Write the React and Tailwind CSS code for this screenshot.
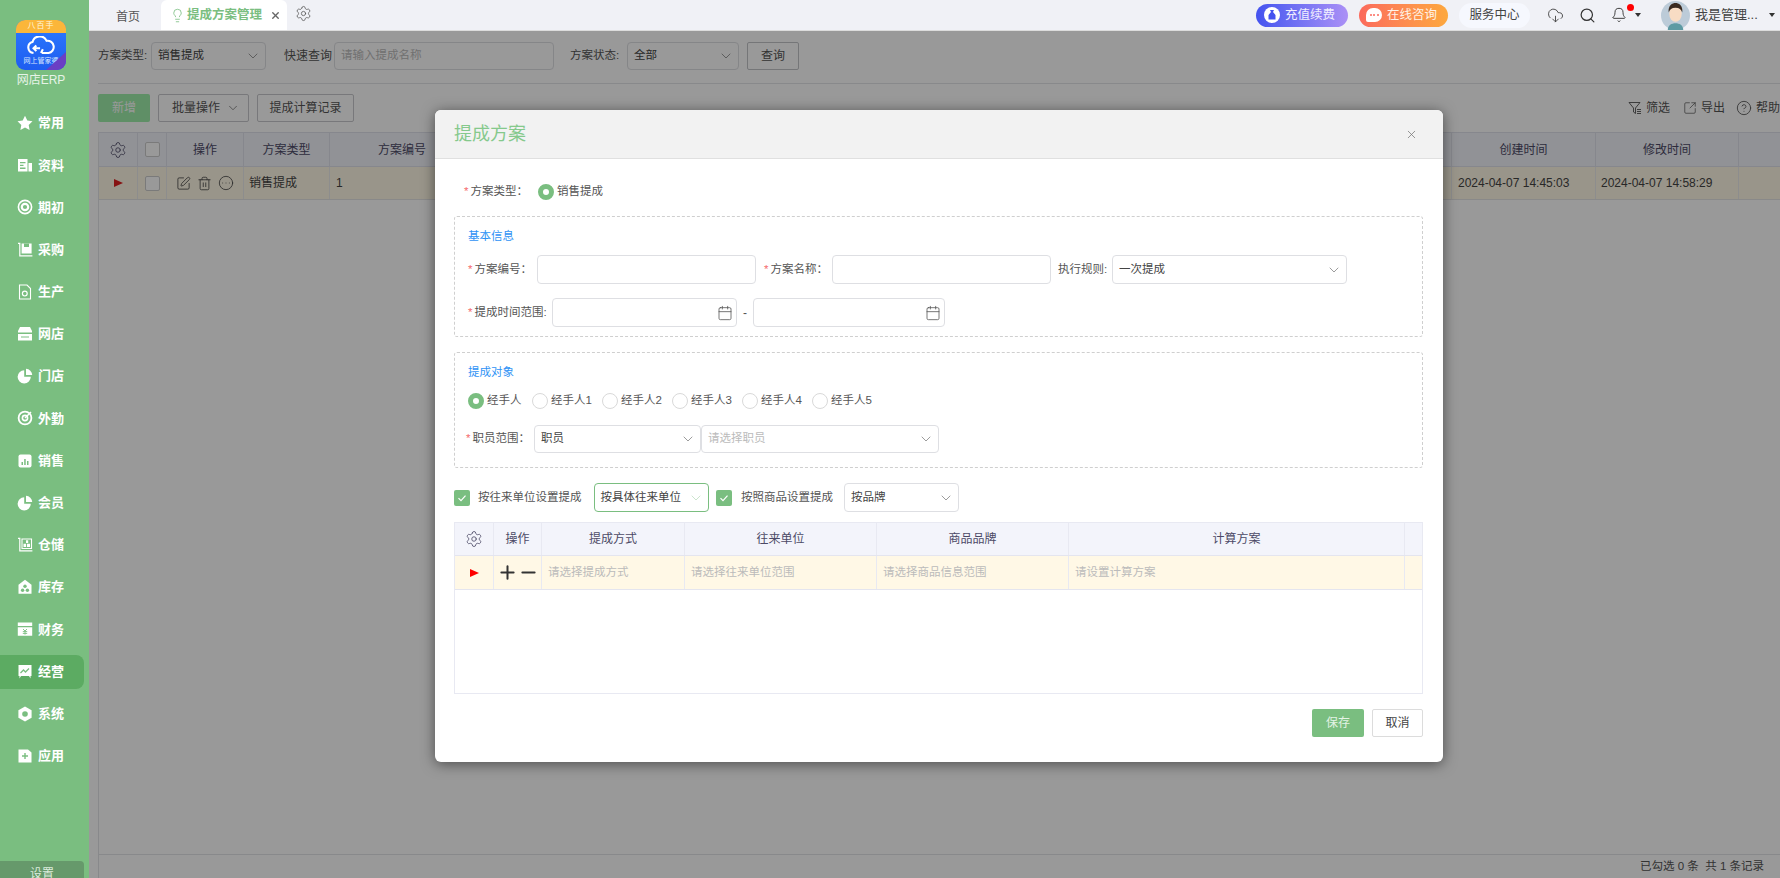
import React from "react";
import { Bell, Calendar, ChevronDown, CircleEllipsis, CircleHelp, CloudDownload, Lightbulb, Minus, Plus, Search, Settings, SquareArrowOutUpRight, SquarePen, Trash2, X } from "lucide-react";

const W = ({ children }) => (
  <svg viewBox="0 0 16 16" className="w-4 h-4 shrink-0" fill="#fff">{children}</svg>
);

const icons = {
  star: <W><path d="M8 .8l2.3 4.8 5.2.7-3.8 3.6.9 5.2L8 12.6l-4.6 2.5.9-5.2L.5 6.3l5.2-.7z" /></W>,
  doc: <W><path d="M1 2h9.5v12.5H1zM11.5 6H15v8.5h-3.5z" /><path d="M3 5h5.5v1.3H3zM3 7.8h3.5v1.3H3zM3 10.6h5.5v1.3H3z" fill="#7abe80" /></W>,
  ring: <W><circle cx="8" cy="8" r="6.6" fill="none" stroke="#fff" strokeWidth="1.6" /><circle cx="8" cy="8" r="3.2" fill="none" stroke="#fff" strokeWidth="2.2" /></W>,
  cart: <W><path d="M4.6 1.5h10v10h-10z" /><path d="M7 1.5h5v3.5H7z" fill="#7abe80" /><path d="M1 .8h2.4v12.4h12v1.2H2.2V2H1z" /></W>,
  make: <W><path d="M2.5 1h7.5l3.5 3.5v10.5h-11z" fill="none" stroke="#fff" strokeWidth="1.1" /><circle cx="7.8" cy="9.6" r="2.4" fill="none" stroke="#fff" strokeWidth="1.2" /></W>,
  shop: <W><path d="M3 1h10l2 4v1.5H1V5zM1 8h14v6.5H1z" /><path d="M4 10.5h8v1H4z" fill="#7abe80" /></W>,
  pie: <W><path d="M7.2 2.2v6.6h6.6A6.6 6.6 0 1 1 7.2 2.2z" /><path d="M9 .8a6.4 6.4 0 0 1 6.2 6.2H9z" /></W>,
  aim: <W><circle cx="8" cy="8" r="6.4" fill="none" stroke="#fff" strokeWidth="1.8" /><circle cx="8" cy="8" r="2.6" fill="none" stroke="#fff" strokeWidth="1.6" /><path d="M8 8l6-6" stroke="#fff" strokeWidth="1.4" /></W>,
  sale: <W><rect x="1.5" y="1.5" width="13" height="13" rx="2" /><path d="M4.5 9h1.5v3H4.5zM7.2 6h1.5v6H7.2zM10 8h1.5v4H10z" fill="#7abe80" /></W>,
  store: <W><path d="M1 .8h2.4v12.4h12v1.2H2.2V2H1z" /><path d="M5 2h9.5v9.5H5z" fill="none" stroke="#fff" strokeWidth="1.1" /><path d="M6.5 6.8h2.6v3.3H6.5zM10 6.8h3v3.3h-3zM9 3.3h2.2v2.6H9z" /></W>,
  house: <W><path d="M8 .8l6.5 5v9H1.5v-9z" /><circle cx="5.6" cy="11.2" r="1.7" fill="#7abe80" /><circle cx="10.4" cy="11.2" r="1.7" fill="#7abe80" /><circle cx="8" cy="7.2" r="1.7" fill="#7abe80" /></W>,
  money: <W><path d="M.8 1.5h14.4v3.5H.8zM.8 6.2h14.4v8.6H.8z" /><path d="M6 8l2 2 2-2M5.8 10.6h4.4M5.8 12.4h4.4M8 10v3.6" fill="none" stroke="#7abe80" strokeWidth=".9" /></W>,
  board: <W><path d="M1.5 1h13v11h-1v2.5l-1.5-2.5H4l-1.5 2.5V12h-1z" /><path d="M3.5 9l3-3 2 2 3.5-3.5" fill="none" stroke="#7abe80" strokeWidth="1.3" /></W>,
  hex: <W><path d="M8 .6l6.6 3.7v7.4L8 15.4l-6.6-3.7V4.3z" /><circle cx="8" cy="8" r="2.8" fill="#7abe80" /></W>,
  add: <W><path d="M1.5 1.5h9.5l3.5 3v10h-13z" /><path d="M7.3 5h1.4v2.3H11v1.4H8.7V11H7.3V8.7H5V7.3h2.3z" fill="#7abe80" /></W>,
};

const menu = [
  ["star", "常用"], ["doc", "资料"], ["ring", "期初"], ["cart", "采购"], ["make", "生产"], ["shop", "网店"], ["pie", "门店"], ["aim", "外勤"],
  ["sale", "销售"], ["pie", "会员"], ["store", "仓储"], ["house", "库存"], ["money", "财务"], ["board", "经营"], ["hex", "系统"], ["add", "应用"],
];

function Logo() {
  return (
    <div className="relative w-[50px] h-[50px] ml-[16px] mt-[20px] rounded-[9px] overflow-hidden bg-gradient-to-b from-[#2f7bff] to-[#1e5cf0]">
      <div className="h-[13px] bg-[#fbb63a] rounded-b-[25px/4px] text-[8px] leading-[12px] text-center text-[#fff6dc] tracking-[1px]">八百手</div>
      <svg viewBox="0 0 32 20" className="absolute left-[10px] top-[16px] w-[30px] h-[19px]" fill="none" stroke="#fff" strokeWidth="2.2">
        <path d="M8 18a6 6 0 0 1-1-11.8A8 8 0 0 1 22 5a6.5 6.5 0 0 1 2 13H17" />
        <path d="M11 10l-3 3 3 3M8 13h7M16 18l2-4" />
      </svg>
      <div className="absolute left-0 right-0 top-[36px] text-[7px] leading-[9px] text-center text-[#d8e6ff]">网上管家婆</div>
      <svg viewBox="0 0 20 18" className="absolute right-0 bottom-0 w-[20px] h-[18px]"><path d="M20 0v18H0z" fill="#6a3fc4" /></svg>
    </div>
  );
}

function Sidebar() {
  return (
    <div className="w-[89px] shrink-0 bg-[#7abe80] flex flex-col h-full">
      <Logo />
      <div className="mt-[3px] mb-[15px] h-[14px] text-[12px] leading-[14px] text-[#e6f3e7] text-center w-[82px]">网店ERP</div>
      {menu.map(([k, t]) => (
        <div key={t} className="h-[42.2px] flex items-center shrink-0">
          <div className={`w-[84px] h-[34px] flex items-center gap-[5px] pl-[17px] rounded-r-lg ${t === "经营" ? "bg-[#5cab62]" : ""}`}>
            {icons[k]}
            <span className="text-[13px] font-bold text-white">{t}</span>
          </div>
        </div>
      ))}
      <div className="mt-auto w-[84px] h-[17px] overflow-hidden bg-[#66996b] rounded-tr text-[12px] leading-[26px] text-center text-[#dcebdd]">设置</div>
    </div>
  );
}

function TopBar() {
  return (
    <div className="h-[31px] shrink-0 bg-[#f0f1f6] border-b border-[#dcdcdc] flex items-stretch text-[12px] text-[#555]">
      <div className="w-[72px] pl-[27px] pt-[8px]">首页</div>
      <div className="w-[126px] bg-white rounded-t-md flex items-center pl-[9px] text-[#7abe80] font-semibold">
        <Lightbulb size={15} strokeWidth={1.3} />
        <span className="ml-[2px] w-[84px] text-[12.5px] whitespace-nowrap">提成方案管理</span>
        <X size={11} strokeWidth={3} className="text-[#666] ml-[-1px]" />
      </div>
      <div className="ml-[8px] pt-[5px]"><Settings size={17} strokeWidth={1.1} className="text-[#555]" /></div>

      <div className="ml-auto flex items-center pr-[5px]">
        <div className="w-[92px] h-[23px] rounded-full bg-gradient-to-r from-[#4452ef] to-[#ab90f6] flex items-center pl-[8px] gap-[5px] text-[#f1efff] text-[12.5px]">
          <span className="w-[16px] h-[16px] rounded-full bg-white flex items-center justify-center">
            <svg viewBox="0 0 12 12" className="w-3 h-3" fill="#4452ef"><path d="M4 1h4L7 3l2.5 3v4.5h-7V6L5 3z" /></svg>
          </span>
          充值续费
        </div>
        <div className="ml-[11px] w-[89px] h-[23px] rounded-full bg-gradient-to-r from-[#fb6a5c] to-[#fda83d] flex items-center pl-[7px] gap-[5px] text-[#fff3e8] text-[12.5px]">
          <span className="w-[16px] h-[14px] rounded-[7px] rounded-bl-[2px] bg-white flex items-center justify-center gap-[1.5px]">
            <i className="w-[2px] h-[2px] rounded-full bg-[#fb6a5c]" />
            <i className="w-[2px] h-[2px] rounded-full bg-[#fb6a5c]" />
            <i className="w-[2px] h-[2px] rounded-full bg-[#fb6a5c]" />
          </span>
          在线咨询
        </div>
        <div className="ml-[11px] w-[71px] h-[25px] rounded-full bg-[#f6f8fe] flex items-center justify-center text-[12.5px] text-[#444]">服务中心</div>
        <CloudDownload size={17} strokeWidth={1.3} className="ml-[17px] text-[#444]" />
        <Search size={17} strokeWidth={1.7} className="ml-[15px] text-[#333]" />
        <div className="relative ml-[15px]">
          <Bell size={16} strokeWidth={1.4} className="text-[#333]" />
          <span className="absolute right-[-7px] top-[-3px] w-[7px] h-[7px] rounded-full bg-[#f00]" />
        </div>
        <span className="ml-[8px] border-x-[3.5px] border-x-transparent border-t-[4px] border-t-[#333]" />
        <svg viewBox="0 0 30 30" className="ml-[20px] w-[29px] h-[29px]">
          <circle cx="15" cy="15" r="15" fill="#bccbd8" />
          <path d="M7 30c0-5 4-7 8-7s8 2 8 7z" fill="#5d9aa3" />
          <ellipse cx="15" cy="13" rx="6.5" ry="8.5" fill="#f8dcc4" />
          <path d="M8 12c-1-8 4-10 7-10s8 2 7 10c-1-3-3-5-7-5s-6 2-7 5z" fill="#3a2a20" />
        </svg>
        <span className="ml-[5px] w-[70px] text-[13px] text-[#444] whitespace-nowrap">我是管理...</span>
        <span className="ml-[4px] border-x-[3.5px] border-x-transparent border-t-[4px] border-t-[#333]" />
      </div>
    </div>
  );
}

function Select({ className, value, placeholder, active }) {
  return (
    <div className={`h-full flex items-center justify-between pl-[6px] pr-[4px] bg-white rounded-[4px] border shrink-0 text-[11.5px] ${active ? "border-[#7abe80]" : "border-[#dedfe3]"} ${className}`}>
      <span className={placeholder ? "text-[#bbb]" : "text-[#444]"}>{value || placeholder}</span>
      <ChevronDown size={16} strokeWidth={1.1} className={active ? "text-[#b9dcbc]" : "text-[#777]"} />
    </div>
  );
}

function Input({ className, calendar }) {
  return (
    <div className={`h-full flex items-center justify-end pr-[3px] bg-white rounded-[4px] border border-[#dedfe3] shrink-0 ${className}`}>
      {calendar && <Calendar size={16} strokeWidth={1.2} className="text-[#555]" />}
    </div>
  );
}

function Background() {
  return (
    <div className="flex-1 min-h-0 bg-white flex flex-col text-[12px] text-[#555] pl-[9px]">
      <div className="h-[53px] shrink-0 border-b border-[#e3e4e8] flex items-center pb-[2px]">
        <span className="w-[53px] whitespace-nowrap text-[11.5px]">方案类型:</span>
        <div className="h-[28px]"><Select className="w-[115px]" value="销售提成" /></div>
        <span className="ml-[18px] w-[50px]">快速查询</span>
        <div className="h-[28px] w-[220px] px-[6px] flex items-center border border-[#dedfe3] rounded-[4px] text-[#bbb] text-[11.5px]">请输入提成名称</div>
        <span className="ml-[16px] w-[57px] whitespace-nowrap text-[11.5px]">方案状态:</span>
        <div className="h-[28px]"><Select className="w-[112px]" value="全部" /></div>
        <div className="ml-[8px] w-[52px] h-[28px] flex items-center justify-center border border-[#c4c5c9] rounded-[2px]">查询</div>
      </div>
      <div className="h-[48px] pt-[10px] shrink-0 flex items-start">
        <div className="w-[52px] h-[28px] flex items-center justify-center bg-[#9eeeab] rounded-[2px] text-white text-[12px]">新增</div>
        <div className="ml-[8px] w-[91px] h-[28px] flex items-center justify-between px-[13px] pr-[8px] border border-[#c8c9cd] rounded-[2px]">批量操作<ChevronDown size={14} strokeWidth={1.1} /></div>
        <div className="ml-[8px] w-[97px] h-[28px] flex items-center justify-center border border-[#c8c9cd] rounded-[2px]">提成计算记录</div>
        <div className="ml-auto flex items-center h-[28px] text-[#555] overflow-hidden whitespace-nowrap">
          <svg viewBox="0 0 14 14" className="w-[14px] h-[14px]" fill="none" stroke="#555" strokeWidth=".9"><path d="M1 1.5h11L7.5 7v5.5L5.5 11V7zM9 8.5h4M9 10.5h4M9 12.5h4" /></svg>
          <span className="ml-[4px]">筛选</span>
          <SquareArrowOutUpRight size={14} strokeWidth={1.2} className="ml-[13px]" />
          <span className="ml-[4px]">导出</span>
          <CircleHelp size={16} strokeWidth={1.3} className="ml-[11px]" />
          <span className="ml-[4px] w-[24px]">帮助</span>
        </div>
      </div>
      <div className="flex-1 min-h-0 border-l border-[#e3e4e8] flex flex-col">
        <div className="h-[35px] shrink-0 flex bg-[#f2f3fa] border-y border-[#dfe1ec] text-[#4c4a66]">
          <div className="w-[39px] flex items-center justify-center border-r border-[#dfe1ec]"><Settings size={18} strokeWidth={1.1} /></div>
          <div className="w-[29px] flex items-center justify-center border-r border-[#dfe1ec]"><span className="w-[15px] h-[15px] border border-[#ccc] bg-white rounded-[2px]" /></div>
          <div className="w-[77px] flex items-center justify-center border-r border-[#dfe1ec]">操作</div>
          <div className="w-[86px] flex items-center justify-center border-r border-[#dfe1ec]">方案类型</div>
          <div className="w-[144px] flex items-center justify-center">方案编号</div>
          <div className="flex-1 border-r border-[#dfe1ec]" />
          <div className="w-[144px] flex items-center justify-center border-r border-[#dfe1ec]">创建时间</div>
          <div className="w-[143px] flex items-center justify-center border-r border-[#dfe1ec]">修改时间</div>
          <div className="w-[41px]" />
        </div>
        <div className="h-[33px] shrink-0 flex bg-[#fff8e6] border-b border-[#e4e4e4] text-[#444]">
          <div className="w-[39px] flex items-center justify-center border-r border-[#ececec]"><span className="border-y-[4px] border-y-transparent border-l-[9px] border-l-[#e02020]" /></div>
          <div className="w-[29px] flex items-center justify-center border-r border-[#ececec]"><span className="w-[15px] h-[15px] border border-[#ccc] bg-white rounded-[2px]" /></div>
          <div className="w-[77px] flex items-center justify-center gap-[6px] border-r border-[#ececec]">
            <SquarePen size={15} strokeWidth={1.3} /><Trash2 size={15} strokeWidth={1.3} /><CircleEllipsis size={16} strokeWidth={1.2} />
          </div>
          <div className="w-[86px] flex items-center pl-[5px] border-r border-[#ececec]">销售提成</div>
          <div className="w-[144px] flex items-center pl-[6px]">1</div>
          <div className="flex-1 border-r border-[#ececec]" />
          <div className="w-[144px] flex items-center pl-[6px] border-r border-[#ececec]">2024-04-07 14:45:03</div>
          <div className="w-[143px] flex items-center pl-[5px] border-r border-[#ececec]">2024-04-07 14:58:29</div>
          <div className="w-[41px]" />
        </div>
        <div className="flex-1" />
        <div className="h-[24px] shrink-0 border-t border-[#e3e4e8] flex items-center justify-end pr-[16px] text-[11.5px]">已勾选 0 条 &nbsp;共 1 条记录</div>
      </div>
    </div>
  );
}

function Label({ children, className }) {
  return (
    <span className={`shrink-0 whitespace-nowrap text-[11.5px] text-[#555] ${className}`}>
      <span className="text-[#f56c6c] mr-[2px]">*</span>{children}
    </span>
  );
}

function Radio({ checked, label, className }) {
  return (
    <div className={`flex items-center gap-[3px] shrink-0 text-[11.5px] text-[#555] ${className}`}>
      <span className={`w-[16px] h-[16px] rounded-full bg-white ${checked ? "border-[5px] border-[#7abe80]" : "border border-[#d9d9d9]"}`} />
      {label}
    </div>
  );
}

function Check() {
  return (
    <span className="w-[16px] h-[16px] shrink-0 bg-[#7abe80] rounded-[2px] flex items-center justify-center">
      <svg viewBox="0 0 12 12" className="w-3 h-3" fill="none" stroke="#fff" strokeWidth="1.2"><path d="M2.5 6.2l2.5 2.5 4.5-5" /></svg>
    </span>
  );
}

function Modal() {
  const cols = "border-r border-[#e8e9f2] flex items-center";
  return (
    <div className="absolute left-[435px] top-[110px] w-[1008px] h-[652px] bg-white rounded-[6px] shadow-[0_2px_14px_rgba(0,0,0,0.5)] overflow-hidden text-[12px] text-[#555]">
      <div className="h-[47px] bg-[#f2f2f2] border-b border-[#e0e0e0] box-content flex items-center justify-between pl-[19px] pr-[25px] pt-[1px]">
        <span className="text-[18px] text-[#85c98c]">提成方案</span>
        <X size={13} strokeWidth={1.4} className="text-[#777]" />
      </div>
      <div className="pl-[19px] pr-[20px] pt-[21px]">
        <div className="h-[24px] flex items-center pl-[10px]">
          <Label className="w-[74px]">方案类型：</Label>
          <Radio checked label="销售提成" />
        </div>

        <div className="mt-[12px] h-[121px] border border-dashed border-[#cfcfcf] rounded-[3px] pl-[13px] pt-[9px]">
          <div className="h-[20px] leading-[20px] text-[#2f93f5] text-[11.5px]">基本信息</div>
          <div className="mt-[9px] h-[29px] flex items-center">
            <Label className="w-[69px]">方案编号：</Label>
            <Input className="w-[219px]" />
            <Label className="ml-[8px] w-[68px]">方案名称：</Label>
            <Input className="w-[219px]" />
            <span className="ml-[7px] w-[54px] shrink-0 text-[11.5px]">执行规则:</span>
            <Select className="w-[235px]" value="一次提成" />
          </div>
          <div className="mt-[14px] h-[29px] flex items-center">
            <Label className="w-[84px]">提成时间范围:</Label>
            <Input className="w-[185px]" calendar />
            <span className="w-[16px] text-center shrink-0">-</span>
            <Input className="w-[192px]" calendar />
          </div>
        </div>

        <div className="mt-[15px] h-[116px] border border-dashed border-[#cfcfcf] rounded-[3px] pl-[13px] pt-[9px]">
          <div className="h-[20px] leading-[20px] text-[#2f93f5] text-[11.5px]">提成对象</div>
          <div className="mt-[9px] h-[20px] flex items-center">
            <Radio checked label="经手人" className="w-[64px]" />
            <Radio label="经手人1" className="w-[70px]" />
            <Radio label="经手人2" className="w-[70px]" />
            <Radio label="经手人3" className="w-[70px]" />
            <Radio label="经手人4" className="w-[70px]" />
            <Radio label="经手人5" className="w-[70px]" />
          </div>
          <div className="mt-[14px] h-[28px] flex items-center ml-[-2px]">
            <Label className="w-[68px]">职员范围：</Label>
            <Select className="w-[167px]" value="职员" />
            <Select className="w-[238px]" placeholder="请选择职员" />
          </div>
        </div>

        <div className="mt-[15px] h-[29px] flex items-center">
          <Check />
          <span className="ml-[8px] w-[115.5px] shrink-0 text-[11.5px]">按往来单位设置提成</span>
          <Select className="w-[115px]" value="按具体往来单位" active />
          <span className="ml-[7.5px]"><Check /></span>
          <span className="ml-[9px] w-[103px] shrink-0 text-[11.5px]">按照商品设置提成</span>
          <Select className="w-[115px]" value="按品牌" />
        </div>

        <div className="mt-[10px] h-[172px] border border-[#e8e9f2] flex flex-col text-[12px]">
          <div className="h-[33px] flex bg-[#f3f4fb] border-b border-[#e4e5ef] text-[#4c4a66] text-center">
            <div className={`w-[39px] justify-center ${cols}`}><Settings size={18} strokeWidth={1.1} /></div>
            <div className={`w-[48px] justify-center ${cols}`}>操作</div>
            <div className={`w-[143px] justify-center ${cols}`}>提成方式</div>
            <div className={`w-[192px] justify-center ${cols}`}>往来单位</div>
            <div className={`w-[192px] justify-center ${cols}`}>商品品牌</div>
            <div className={`w-[336px] justify-center ${cols}`}>计算方案</div>
            <div className="flex-1" />
          </div>
          <div className="h-[34px] flex bg-[#fff8e6] border-b border-[#e4e5ef] text-[#bbb] text-[11.5px]">
            <div className={`w-[39px] justify-center ${cols}`}><span className="border-y-[4px] border-y-transparent border-l-[9px] border-l-[#f00]" /></div>
            <div className={`w-[48px] justify-center text-[#333] ${cols}`}><Plus size={21} strokeWidth={2.3} className="shrink-0" /><Minus size={21} strokeWidth={2.3} className="shrink-0" /></div>
            <div className={`w-[143px] pl-[6px] ${cols}`}>请选择提成方式</div>
            <div className={`w-[192px] pl-[6px] ${cols}`}>请选择往来单位范围</div>
            <div className={`w-[192px] pl-[6px] ${cols}`}>请选择商品信息范围</div>
            <div className={`w-[336px] pl-[6px] ${cols}`}>请设置计算方案</div>
            <div className="flex-1" />
          </div>
          <div className="flex-1" />
        </div>

        <div className="mt-[15px] h-[28px] flex justify-end gap-[8px]">
          <div className="w-[52px] flex items-center justify-center bg-[#7abe80] rounded-[2px] text-[#e4f3e5]">保存</div>
          <div className="w-[51px] flex items-center justify-center border border-[#dcdcdc] rounded-[2px] text-[#444]">取消</div>
        </div>
      </div>
    </div>
  );
}

export default function App() {
  return (
    <div className="relative h-screen overflow-hidden flex font-['Liberation_Sans','Noto_Sans_CJK_SC',sans-serif]">
      <Sidebar />
      <div className="flex-1 min-w-0 flex flex-col">
        <TopBar />
        <div className="relative flex-1 min-h-0 flex flex-col">
          <Background />
          <div className="absolute inset-0 bg-black/40" />
        </div>
      </div>
      <Modal />
    </div>
  );
}
